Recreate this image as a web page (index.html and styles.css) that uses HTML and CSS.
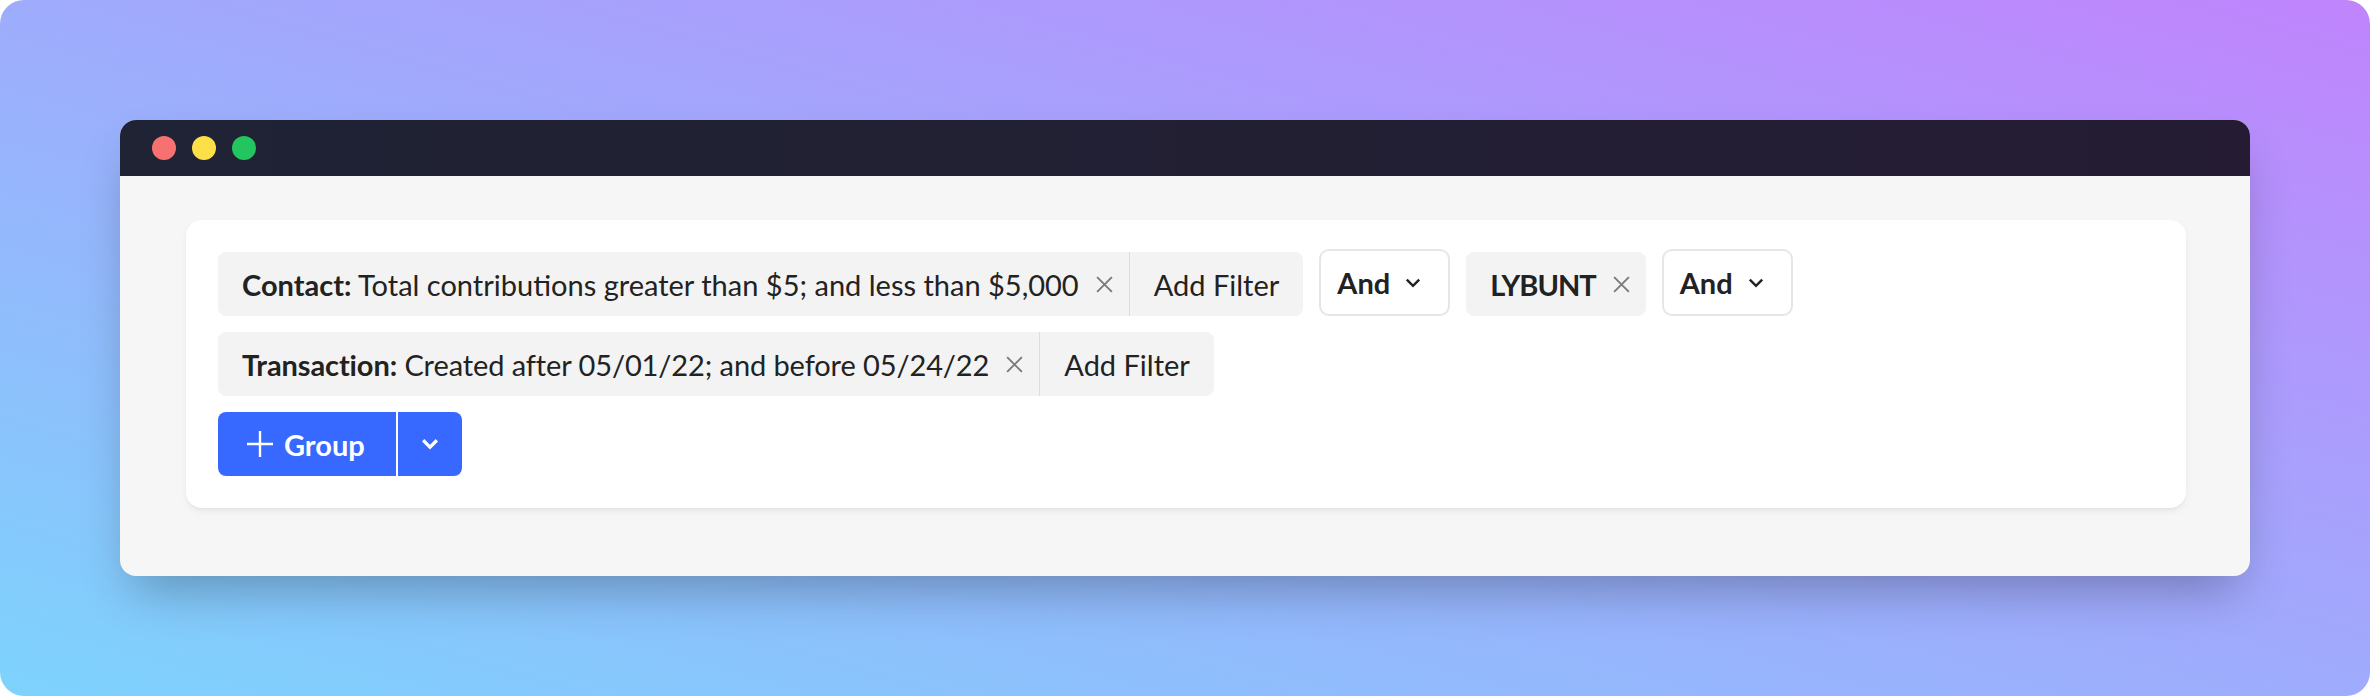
FILE: index.html
```html
<!DOCTYPE html>
<html>
<head>
<meta charset="utf-8">
<link rel="stylesheet" href="styles.css">
</head>
<body>
<div class="bg">
  <div class="window">
    <div class="titlebar">
      <span class="dot red"></span>
      <span class="dot yellow"></span>
      <span class="dot green"></span>
    </div>
    <div class="content">
      <div class="card">
        <div class="row">
          <div class="chip">
            <div class="chip-main">
              <span class="chip-text"><b>Contact:</b> Total contributions greater than $5; and less than $5,000</span>
              <svg class="x" viewBox="0 0 18 18"><path d="M2 2 L16 16 M16 2 L2 16"/></svg>
            </div>
            <div class="chip-add">Add Filter</div>
          </div>
          <div class="and">And <svg class="chev" viewBox="0 0 16 16"><path d="M2.5 5 L8 10.5 L13.5 5"/></svg></div>
          <div class="chip">
            <div class="chip-main">
              <span class="chip-text tight"><b>LYBUNT</b></span>
              <svg class="x" viewBox="0 0 18 18"><path d="M2 2 L16 16 M16 2 L2 16"/></svg>
            </div>
          </div>
          <div class="and">And <svg class="chev" viewBox="0 0 16 16"><path d="M2.5 5 L8 10.5 L13.5 5"/></svg></div>
        </div>
        <div class="row">
          <div class="chip">
            <div class="chip-main">
              <span class="chip-text narrow"><b>Transaction:</b> Created after 05/01/22; and before 05/24/22</span>
              <svg class="x" viewBox="0 0 18 18"><path d="M2 2 L16 16 M16 2 L2 16"/></svg>
            </div>
            <div class="chip-add">Add Filter</div>
          </div>
        </div>
        <div class="row">
          <div class="group-btn">
            <div class="group-main">
              <svg class="plus" viewBox="0 0 28 28"><path d="M14 1 V27 M1 14 H27"/></svg>
              <span>Group</span>
            </div>
            <div class="group-drop">
              <svg class="chev-w" viewBox="0 0 16 16"><path d="M2.5 5 L8 10.5 L13.5 5"/></svg>
            </div>
          </div>
        </div>
      </div>
    </div>
  </div>
</div>
</body>
</html>
```
FILE: styles.css
```css
* { box-sizing: border-box; }
html, body { margin: 0; padding: 0; background: #ffffff; }
body { font-family: "Lato", "Open Sans", sans-serif; color: #222222; }

.bg {
  width: 2370px;
  height: 696px;
  border-radius: 24px;
  background: linear-gradient(to top right, #7dd3fc, #c084fc);
  padding: 120px 120px 0 120px;
}

.window {
  width: 2130px;
  height: 456px;
  border-radius: 16px;
  overflow: hidden;
  background: #f6f6f6;
  box-shadow: 0 25px 50px -12px rgba(0, 0, 0, 0.28);
  display: flex;
  flex-direction: column;
}

.titlebar {
  height: 56px;
  flex: none;
  background: linear-gradient(to right, #1f2334, #251c33);
  display: flex;
  align-items: center;
  gap: 16px;
  padding-left: 32px;
}
.dot { width: 24px; height: 24px; border-radius: 50%; display: block; }
.red { background: #f87171; }
.yellow { background: #fde047; }
.green { background: #22c55e; }

.content {
  flex: 1;
  padding: 44px 64px 0 66px;
}

.card {
  width: 2000px;
  background: #ffffff;
  border-radius: 16px;
  padding: 32px;
  box-shadow: 0 4px 8px -2px rgba(0, 0, 0, 0.08), 0 2px 4px -2px rgba(0, 0, 0, 0.06);
  display: flex;
  flex-direction: column;
  gap: 16px;
}

.row { display: flex; align-items: center; gap: 16px; height: 64px; }

.chip {
  display: flex;
  height: 64px;
  background: #f3f3f3;
  border-radius: 8px;
  font-size: 29px;
}
.chip-main {
  display: flex;
  align-items: center;
  gap: 16px;
  padding: 0 15px 0 24px;
}
.chip-text { white-space: nowrap; }
.chip-text b { font-weight: 700; }
.tight { letter-spacing: -1px; }
.narrow { letter-spacing: -0.1px; }
.x { width: 19px; height: 19px; fill: none; stroke: #7a7a7a; stroke-width: 1.8; }
.chip-add {
  display: flex;
  align-items: center;
  border-left: 1px solid #dcdcdc;
  padding: 0 24px;
  white-space: nowrap;
}

.and {
  display: flex;
  align-items: center;
  gap: 14px;
  height: 67px;
  margin-top: -3px;
  padding: 0 26px 0 16px;
  border: 2px solid #e6e6e6;
  border-radius: 10px;
  background: #ffffff;
  font-size: 29px;
  font-weight: 700;
}
.chev { width: 18px; height: 18px; fill: none; stroke: #222; stroke-width: 2.2; }

.group-btn {
  display: flex;
  height: 64px;
  background: #3768ff;
  border-radius: 8px;
  color: #ffffff;
  font-size: 29px;
  font-weight: 700;
}
.group-main {
  display: flex;
  align-items: center;
  gap: 10px;
  padding: 0 28px 0 28px;
  width: 178px;
}
.plus { width: 28px; height: 28px; fill: none; stroke: #ffffff; stroke-width: 2.4; }
.group-drop {
  width: 66px;
  border-left: 2px solid #ffffff;
  display: flex;
  align-items: center;
  justify-content: center;
}
.chev-w { width: 20px; height: 20px; fill: none; stroke: #ffffff; stroke-width: 2.6; }
```
